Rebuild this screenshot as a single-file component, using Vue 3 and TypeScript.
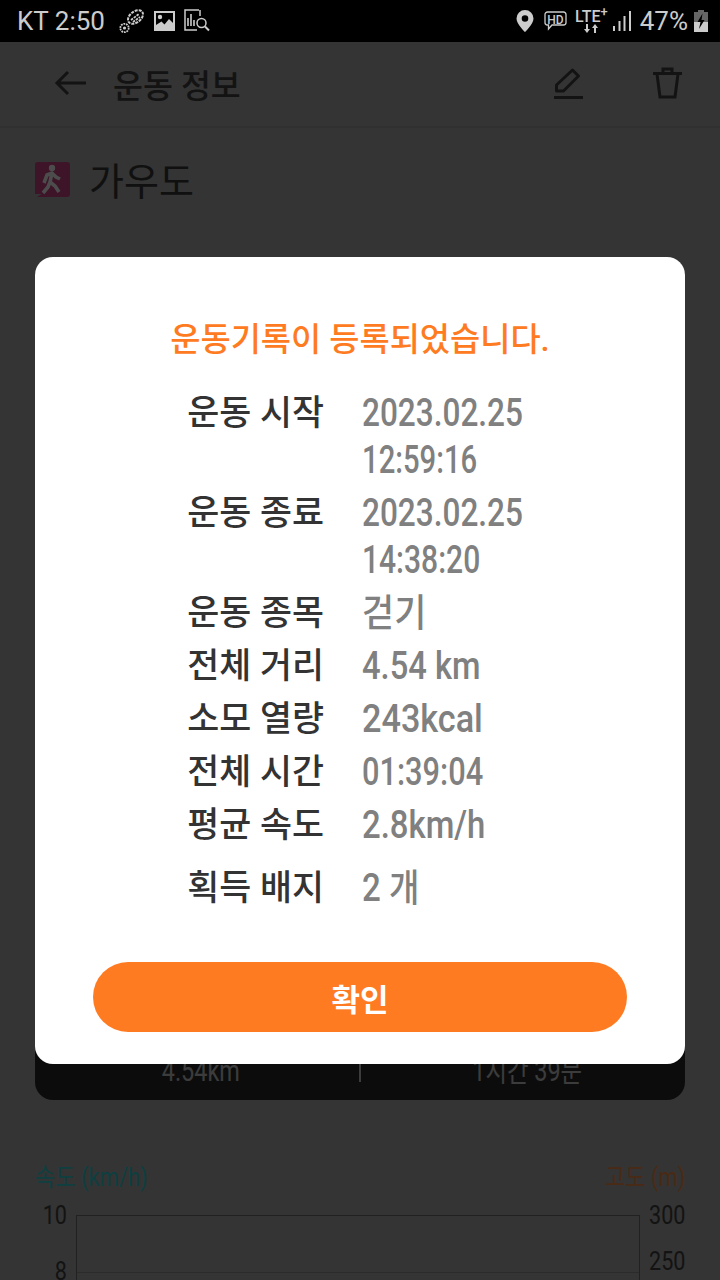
<script setup lang="ts">
interface InfoLine {
  text: string
  fit: number
}

interface InfoRow {
  label: string
  lines: InfoLine[]
}

// horizontal squeeze per line, the device font is narrower than Roboto
const rows: InfoRow[] = [
  { label: '운동 시작', lines: [{ text: '2023.02.25', fit: 0.83 }, { text: '12:59:16', fit: 0.77 }] },
  { label: '운동 종료', lines: [{ text: '2023.02.25', fit: 0.83 }, { text: '14:38:20', fit: 0.79 }] },
  { label: '운동 종목', lines: [{ text: '걷기', fit: 0.92 }] },
  { label: '전체 거리', lines: [{ text: '4.54 km', fit: 0.86 }] },
  { label: '소모 열량', lines: [{ text: '243kcal', fit: 0.9 }] },
  { label: '전체 시간', lines: [{ text: '01:39:04', fit: 0.81 }] },
  { label: '평균 속도', lines: [{ text: '2.8km/h', fit: 0.865 }] }
]

const leftTicks = ['10', '8']
const rightTicks = ['300', '250']
</script>

<template>
  <div class="screen">
    <div class="status-bar">
      <div class="status-left">
        <span class="status-text">KT 2:50</span>
        <svg class="st-icon shoe" width="26" height="26" viewBox="0 0 26 26" fill="none" stroke="#ccc">
          <ellipse cx="16.5" cy="9" rx="8.5" ry="5.5" transform="rotate(-38 16.5 9)" stroke-width="2" stroke-dasharray="3 1" />
          <path d="M12 12l8-6M14 14l7-5" stroke-width="1.8" stroke-dasharray="2.500 1" />
          <circle cx="5.5" cy="20" r="4.2" stroke-width="1.8" stroke-dasharray="1.800 .8" />
          <circle cx="5.5" cy="20" r="1.6" fill="#ccc" stroke="none" />
        </svg>
        <svg class="st-icon" width="21" height="20" viewBox="0 0 21 20">
          <path fill="#ccc" d="M0 0h21v20H0z" />
          <path fill="#000" d="M2 2h17v10l-4-4-4.500 5.500-3-3L2 14z" />
          <circle cx="6" cy="6" r="2.2" fill="#ccc" />
        </svg>
        <svg class="st-icon" width="26" height="24" viewBox="0 0 26 24" fill="none" stroke="#ccc" stroke-width="1.5">
          <path d="M15 1H1v20h12M16 1v6" />
          <path d="M4 17V9M7 17V5M10 17v-6" stroke-width="1.6" />
          <circle cx="17.5" cy="14" r="4.5" />
          <path d="M21 17.5l4 4" stroke-width="2" />
        </svg>
      </div>
      <div class="status-right">
        <svg class="pin" width="18" height="22" viewBox="0 0 18 22">
          <path fill="#ccc" fill-rule="evenodd" d="M9 0a8.500 8.500 0 0 1 8.500 8.500C17.500 14 9 22 9 22S.5 14 .5 8.500A8.500 8.500 0 0 1 9 0zm0 5.200a3.300 3.300 0 1 0 0 6.600 3.300 3.300 0 0 0 0-6.600z" />
        </svg>
        <svg class="hd" width="23" height="20" viewBox="0 0 23 20">
          <path fill="none" stroke="#ccc" stroke-width="1.3" d="M3.500 1h16a2.500 2.500 0 0 1 2.500 2.500v8a2.500 2.500 0 0 1-2.500 2.500H8l-3.500 4v-4h-1A2.500 2.500 0 0 1 1 11.500v-8A2.500 2.500 0 0 1 3.500 1z" />
          <text x="11.500" y="12.500" text-anchor="middle" class="hd-text">HD</text>
        </svg>
        <span class="lte">
          <span class="lte-text">LTE<sup>+</sup></span>
          <svg width="14" height="9" viewBox="0 0 14 9" fill="#ccc">
            <path d="M3 9L0 5h2V0h2v5h2zM11 0l3 4h-2v5h-2V4H8z" />
          </svg>
        </span>
        <svg class="signal" width="18" height="20" viewBox="0 0 18 20" fill="#ccc">
          <path d="M0 15h2v5H0zM5.500 10h2v10h-2zM10.500 5h2v15h-2zM16 0h2v20h-2z" />
        </svg>
        <span class="status-text pct">47%</span>
        <svg class="battery" width="14" height="22" viewBox="0 0 14 22">
          <path fill="#666" d="M4 0h6v2h4v20H0V2h4z" />
          <path fill="#ccc" d="M0 12h14v10H0z" />
          <path fill="#000" d="M8.500 3.500L3.500 12h3l-1.500 7 5.500-9H7.500z" />
        </svg>
      </div>
    </div>

    <div class="page">
      <header class="app-header">
        <svg class="back" width="34" height="26" viewBox="0 0 34 26" fill="none" stroke="#404040" stroke-width="3">
          <path d="M32 13H3M14 2L3 13l11 11" />
        </svg>
        <h1>운동 정보</h1>
        <svg class="edit" width="30" height="32" viewBox="0 0 30 32" fill="none" stroke="#404040" stroke-width="3">
          <path d="M2.500 24v-6L18.500 3l6 6-15 15z" stroke-linejoin="round" />
          <path d="M0 30.500h29" />
        </svg>
        <svg class="trash" width="30" height="32" viewBox="0 0 30 32" fill="none" stroke="#404040" stroke-width="3">
          <path d="M0 6.500h29M4 7l3 23h15l3-23M10 6V2h9v4" />
        </svg>
      </header>

      <div class="course">
        <svg width="35" height="35" viewBox="0 0 35 35">
          <path fill="#cb4385" d="M3 0h29a3 3 0 0 1 3 3v29a3 3 0 0 1-3 3H2l5-3H0V3a3 3 0 0 1 3-3z" />
          <circle cx="17" cy="6" r="3.200" fill="#fff" />
          <path fill="none" stroke="#fff" stroke-width="3.600" d="M9 21l3-8 5-2 4 4 4 2M17 11l-2 9 5 4 4 6M15 20l-2 5-5 6" />
        </svg>
        <span class="course-name">가우도</span>
      </div>

      <div class="summary">
        <span>4.54km</span>
        <i class="divider"></i>
        <span>1시간 39분</span>
      </div>

      <div class="chart-title">
        <span class="speed">속도 (km/h)</span>
        <span class="alt">고도 (m)</span>
      </div>

      <div class="chart">
        <div class="ticks left">
          <span v-for="t in leftTicks" :key="t">{{ t }}</span>
        </div>
        <div class="plot">
          <i></i><i></i><i></i>
        </div>
        <div class="ticks right">
          <span v-for="t in rightTicks" :key="t">{{ t }}</span>
        </div>
      </div>

      <div class="scrim">
        <div class="dialog">
          <h2>운동기록이 등록되었습니다.</h2>
          <div class="info">
            <div v-for="row in rows" :key="row.label" class="info-row">
              <span class="label">{{ row.label }}</span>
              <div class="value">
                <span v-for="line in row.lines" :key="line.text" :style="{ transform: `scaleX(${line.fit})` }">{{ line.text }}</span>
              </div>
            </div>
            <div class="info-row badge-row">
              <span class="label">획득 배지</span>
              <div class="value"><span class="badge-count">2 개</span></div>
            </div>
          </div>
          <button type="button" class="ok-btn">확인</button>
        </div>
      </div>
    </div>
  </div>
</template>

<style>
html,
body {
  margin: 0;
  background: #343434;
}
</style>

<style scoped>
.screen {
  width: 720px;
  height: 1280px;
  overflow: hidden;
  display: flex;
  flex-direction: column;
  font-family: Roboto, "Noto Sans CJK KR", sans-serif;
}

.status-bar {
  height: 42px;
  flex: none;
  background: #000;
  display: flex;
  justify-content: space-between;
  align-items: center;
  padding: 0 12px 0 17px;
  box-sizing: border-box;
}

.status-left,
.status-right {
  display: flex;
  align-items: center;
}

.status-text {
  font-size: 26px;
  color: #ccc;
}

.status-left .st-icon {
  margin-left: 9px;
}

.status-left .shoe {
  margin-left: 8px;
}

.status-left .status-text {
  margin-right: 6px;
}

.hd {
  margin-left: 10px;
}

.hd-text {
  font-size: 12px;
  font-weight: 500;
  fill: #ccc;
}

.lte {
  display: flex;
  flex-direction: column;
  align-items: center;
  margin-left: 8px;
}

.lte-text {
  font-size: 16px;
  line-height: 15px;
  font-weight: 500;
  color: #ccc;
}

.lte-text sup {
  font-size: 13px;
  line-height: 0;
}

.signal {
  margin-left: 5px;
}

.pct {
  margin-left: 9px;
}

.battery {
  margin-left: 6px;
}

.page {
  position: relative;
  flex: 1;
  background: #adadad;
  overflow: hidden;
}

.app-header {
  height: 86px;
  display: flex;
  align-items: center;
  padding: 0 37px 2px 54px;
  border-bottom: 2px solid #a0a0a0;
  box-sizing: border-box;
}

.app-header h1 {
  margin: 0 0 0 25px;
  flex: 1;
  font-size: 32.5px;
  font-weight: 500;
  color: #404040;
}

.app-header .trash {
  margin-left: 69px;
}

.course {
  display: flex;
  align-items: center;
  gap: 19px;
  padding: 33px 35px 0;
}

.course-name {
  font-size: 38px;
  line-height: 37px;
  color: #383838;
  position: relative;
  top: 3px;
}

.summary {
  margin: 802px 35px 0;
  height: 100px;
  background: #2b2b2b;
  border-radius: 18px;
  display: grid;
  grid-template-columns: 1fr 2px 1fr;
  align-items: end;
  justify-items: center;
  padding-bottom: 14px;
  box-sizing: border-box;
  font-size: 30px;
  line-height: 30px;
  color: #c8c8c8;
}

.summary span {
  display: inline-block;
  padding-left: 11px;
  transform: scaleX(0.78);
}

.divider {
  width: 2px;
  height: 36px;
  margin-bottom: 4px;
  background: #c8c8c8;
}

.chart-title {
  display: flex;
  justify-content: space-between;
  padding: 0 35px;
  margin-top: 61px;
  font-size: 25px;
  line-height: 34px;
}

.speed {
  color: #32d2d5;
  transform: scaleX(0.88);
  transform-origin: left center;
}

.alt {
  color: #f68c46;
  transform: scaleX(0.88);
  transform-origin: right center;
}

.chart {
  display: grid;
  grid-template-columns: 32px 564px 45px;
  column-gap: 9px;
  margin: 20px 35px 0 35px;
  height: 300px;
  color: #404040;
  font-size: 26px;
}

.ticks {
  display: flex;
  flex-direction: column;
  margin-top: -13px;
  transform: scaleX(0.83);
}

.ticks span {
  line-height: 26px;
}

.ticks.left {
  text-align: right;
  gap: 30px;
  transform-origin: right center;
}

.ticks.right {
  gap: 20px;
  transform-origin: left center;
}

.plot {
  border: 1px solid #707070;
  border-bottom: none;
  display: flex;
  flex-direction: column;
}

.plot i {
  display: block;
  height: 57px;
  flex: none;
  border-bottom: 1px solid #909090;
  box-sizing: border-box;
}

.scrim {
  position: absolute;
  inset: 0;
  background: rgba(0, 0, 0, 0.7);
  padding: 215px 35px 0;
}

.dialog {
  height: 807px;
  box-sizing: border-box;
  background: #fff;
  border-radius: 18px;
  padding: 64px 58px 32px;
  display: flex;
  flex-direction: column;
}

.dialog h2 {
  margin: 0;
  font-size: 32.8px;
  line-height: 38px;
  font-weight: 500;
  color: #ff7b22;
  text-align: center;
}

.info {
  flex: 1;
  margin-top: 31px;
}

.info-row {
  display: grid;
  grid-template-columns: 231px 1fr;
  column-gap: 38px;
  padding-bottom: 6px;
}

.badge-row {
  margin-top: 10px;
}

.label {
  text-align: right;
  font-size: 34.8px;
  line-height: 47px;
  font-weight: 500;
  color: #333;
}

.value {
  display: flex;
  flex-direction: column;
  font-size: 38px;
  line-height: 47px;
  font-weight: 500;
  color: #808080;
}

.value span {
  transform-origin: left center;
}

.badge-count {
  transform: scaleX(0.87);
}

.ok-btn {
  height: 70px;
  border: none;
  border-radius: 35px;
  background: #ff7b22;
  color: #fff;
  font-family: inherit;
  font-size: 31px;
  font-weight: 700;
  flex: none;
}
</style>
